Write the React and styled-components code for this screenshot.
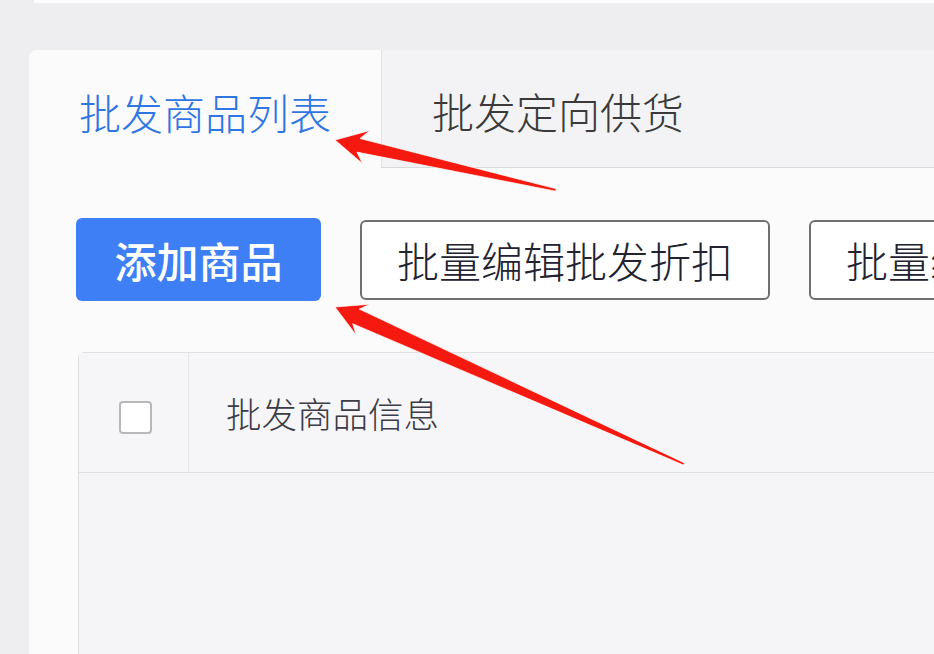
import React from 'react';
import styled, { createGlobalStyle } from 'styled-components';

// red annotation arrows: tip, tail and head sizes in page pixels
const arrows = [
  { id: 'tab', tip: [335, 140], tail: [556, 190], head: 32, half: 17, neck: 24, shaft: 7 },
  { id: 'btn', tip: [335, 307], tail: [684, 464], head: 31, half: 17, neck: 23, shaft: 8 },
];

const arrowPoints = ({ tip, tail, head, half, neck, shaft }) => {
  const dx = tail[0] - tip[0];
  const dy = tail[1] - tip[1];
  const len = Math.hypot(dx, dy);
  const u = [dx / len, dy / len];
  const n = [-u[1], u[0]];
  const at = (d, w) => [tip[0] + u[0] * d + n[0] * w, tip[1] + u[1] * d + n[1] * w];
  const pts = [
    tip,
    at(head, half),
    at(neck, shaft),
    at(len, 1.2),
    at(len, -1.2),
    at(neck, -shaft),
    at(head, -half),
  ];
  return pts.map(p => p.map(v => v.toFixed(1)).join(',')).join(' ');
};

const tabs = [
  { id: 'list', label: '批发商品列表', active: true },
  { id: 'direct', label: '批发定向供货', active: false },
];

const actions = [
  { id: 'add', label: '添加商品', primary: true },
  { id: 'discount', label: '批量编辑批发折扣' },
  { id: 'more', label: '批量编辑批发价格' },
];

const App = () => {
  return (
    <Page>
      <GlobalStyle />
      <TopStrip />
      <Card>
        <TabBar>
          {tabs.map(t => (
            <Tab key={t.id} $active={t.active}>{t.label}</Tab>
          ))}
        </TabBar>
        <Body>
          <Toolbar>
            {actions.map(a => (
              <ActionButton key={a.id} $primary={a.primary}>{a.label}</ActionButton>
            ))}
          </Toolbar>
          <Table>
            <HeadRow>
              <CheckCell>
                <Checkbox />
              </CheckCell>
              <HeadTitle>批发商品信息</HeadTitle>
            </HeadRow>
            <TableBody />
          </Table>
        </Body>
      </Card>
      <Annotations width="934" height="654" viewBox="0 0 934 654">
        {arrows.map(a => (
          <polygon
            key={a.id}
            points={arrowPoints(a)}
            fill="#f5190f"
            stroke="#ffffff"
            strokeOpacity="0.7"
            strokeWidth="1"
            strokeLinejoin="round"
          />
        ))}
      </Annotations>
    </Page>
  );
};

export default App;

const GlobalStyle = createGlobalStyle`
  html, body {
    margin: 0;
    padding: 0;
    background: #eeeef1;
    overflow: hidden;
  }
  * {
    box-sizing: border-box;
  }
`;

const Page = styled.div`
  position: relative;
  width: 934px;
  height: 654px;
  overflow: hidden;
  display: flex;
  flex-direction: column;
  background: #eeeef1;
  font-family: "Noto Sans CJK SC", "Noto Sans", sans-serif;
`;

const TopStrip = styled.div`
  height: 3px;
  margin-left: 34px;
  background: #fdfdfe;
  flex: 0 0 auto;
`;

const Card = styled.div`
  flex: 1;
  margin: 47px 0 0 29px;
  background: #fbfbfc;
  border-radius: 8px 0 0 0;
  display: flex;
  flex-direction: column;
  overflow: hidden;
`;

const TabBar = styled.div`
  display: flex;
  height: 118px;
  flex: 0 0 auto;
`;

const Tab = styled.div`
  display: flex;
  align-items: center;
  padding: 4px 50px 0;
  font-size: 42px;
  font-weight: 300;
  color: ${p => (p.$active ? '#2f76e2' : '#3a3a3a')};
  background: ${p => (p.$active ? '#fbfbfc' : '#f3f3f5')};
  border-left: ${p => (p.$active ? 'none' : '1px solid #e3e3e6')};
  border-bottom: ${p => (p.$active ? 'none' : '1px solid #d9d9dc')};
  width: ${p => (p.$active ? '352px' : 'auto')};
  flex: ${p => (p.$active ? '0 0 auto' : '1')};
  justify-content: ${p => (p.$active ? 'center' : 'flex-start')};
`;

const Body = styled.div`
  flex: 1;
  display: flex;
  flex-direction: column;
  padding: 50px 0 0 47px;
`;

const Toolbar = styled.div`
  display: flex;
  align-items: center;
  gap: 39px;
  height: 83px;
  white-space: nowrap;
`;

const ActionButton = styled.div`
  flex: 0 0 auto;
  display: flex;
  align-items: center;
  justify-content: center;
  height: ${p => (p.$primary ? '83px' : '80px')};
  padding: 0 35px;
  border-radius: 6px;
  font-size: 42px;
  font-weight: ${p => (p.$primary ? 500 : 300)};
  color: ${p => (p.$primary ? '#ffffff' : '#222230')};
  background: ${p => (p.$primary ? '#3f7ff6' : '#ffffff')};
  border: ${p => (p.$primary ? 'none' : '2px solid #707070')};
  width: ${p => (p.$primary ? '245px' : 'auto')};
`;

const Table = styled.div`
  flex: 1;
  margin: 51px 0 0 2px;
  border: 1px solid #e0e0e3;
  border-right: none;
  border-bottom: none;
  border-radius: 6px 0 0 0;
  display: flex;
  flex-direction: column;
  background: #f5f5f7;
`;

const HeadRow = styled.div`
  display: flex;
  height: 120px;
  flex: 0 0 auto;
  background: #f6f6f8;
  border-bottom: 1px solid #dfdfe2;
`;

const CheckCell = styled.div`
  width: 110px;
  display: flex;
  align-items: center;
  justify-content: center;
  padding: 9px 0 0 3px;
  border-right: 1px solid #e6e6e9;
`;

const Checkbox = styled.div`
  width: 33px;
  height: 33px;
  border: 2px solid #b8b8bb;
  border-radius: 4px;
  background: #ffffff;
`;

const HeadTitle = styled.div`
  display: flex;
  align-items: center;
  padding: 0 0 0 37px;
  font-size: 35.5px;
  font-weight: 300;
  color: #3c3c46;
`;

const TableBody = styled.div`
  flex: 1;
  background: #f5f5f7;
`;

const Annotations = styled.svg`
  position: absolute;
  left: 0;
  top: 0;
  pointer-events: none;
`;
